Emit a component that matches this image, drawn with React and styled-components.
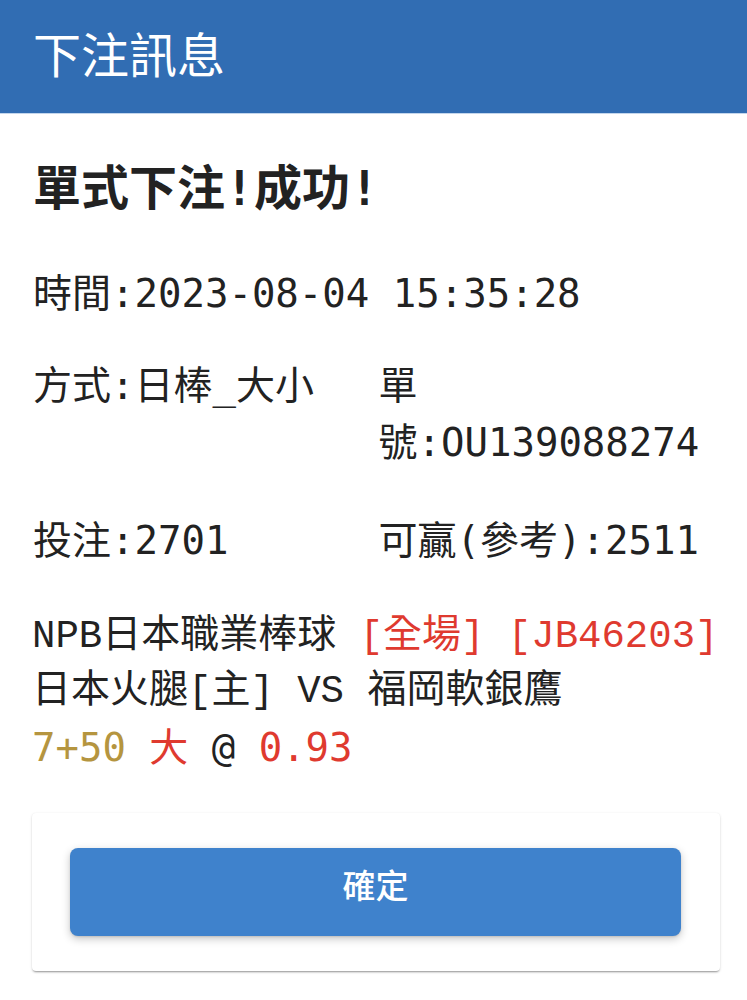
import React from "react";
import styled, { createGlobalStyle } from "styled-components";

const Global = createGlobalStyle`
  html, body { margin: 0; padding: 0; background: #ffffff; }
  body { font-family: "DejaVu Sans Mono", "Noto Sans CJK TC", monospace; color: #222; }
`;

const Page = styled.div`
  width: 747px;
  min-height: 1000px;
  background: #fff;
`;

const Header = styled.header`
  height: 114px;
  background: #316db3;
  border-bottom: 1px solid #c3d6ec;
  display: flex;
  align-items: center;
  padding-left: 33px;
  box-sizing: border-box;
`;

const HeaderTitle = styled.h1`
  margin: 0 0 10px;
  font-family: "Noto Sans CJK TC", sans-serif;
  font-weight: 400;
  font-size: 48px;
  line-height: 1;
  color: #fff;
`;

const Content = styled.main`
  padding: 41px 27px 0 32px;
  display: flex;
  flex-direction: column;
`;

const Title = styled.h2`
  margin: 0 0 0 1px;
  font-family: "DejaVu Sans Mono", "Noto Sans CJK TC", monospace;
  font-weight: 700;
  font-size: 48px;
  line-height: 67px;
  color: #222;
`;

const Block = styled.div`
  margin-top: ${(p) => p.$gap || 40}px;
  font-size: 39px;
  line-height: 57px;
  padding-left: 1px;
`;

const TwoCol = styled.div`
  margin-top: ${(p) => p.$gap || 40}px;
  display: grid;
  grid-template-columns: 1fr 1fr;
  column-gap: 4px;
  font-size: 39px;
  line-height: 57px;
  padding-left: 1px;
`;

const Cell = styled.div``;

const Match = styled.div`
  margin-top: 41px;
  font-family: "Liberation Mono", "Noto Sans CJK TC", monospace;
  font-size: 39px;
  line-height: 55px;
`;

const Line = styled.div`
  white-space: nowrap;
`;

const Tone = styled.span`
  color: ${(p) =>
    p.$tone === "red" ? "#df3a2f" : p.$tone === "gold" ? "#b5953f" : "#222"};
  font-family: ${(p) =>
    p.$sans ? `"DejaVu Sans Mono", "Noto Sans CJK TC", monospace` : "inherit"};
`;

const Card = styled.div`
  margin-top: 34px;
  background: #fff;
  border-radius: 4px;
  padding: 35px 39px 35px 38px;
  box-shadow: 0 2px 2px -1px rgba(0, 0, 0, 0.35), 0 1px 3px rgba(0, 0, 0, 0.12),
    0 0 1px rgba(0, 0, 0, 0.06);
`;

const Button = styled.button`
  display: block;
  width: 100%;
  height: 88px;
  padding: 0 0 16px;
  border: none;
  border-radius: 8px;
  background: #3f82cc;
  color: #fff;
  font-family: "Noto Sans CJK TC", sans-serif;
  font-weight: 500;
  font-size: 33px;
  cursor: pointer;
  box-shadow: 0 3px 8px rgba(0, 0, 0, 0.22), 0 1px 2px rgba(0, 0, 0, 0.1);
`;

export default function App() {
  return (
    <Page>
      <Global />
      <Header>
        <HeaderTitle>下注訊息</HeaderTitle>
      </Header>
      <Content>
        <Title>單式下注!成功!</Title>
        <Block $gap={43}>時間:2023-08-04 15:35:28</Block>
        <TwoCol $gap={35}>
          <Cell>方式:日棒_大小</Cell>
          <Cell>單號:OU139088274</Cell>
        </TwoCol>
        <TwoCol $gap={41}>
          <Cell>投注:2701</Cell>
          <Cell>可贏(參考):2511</Cell>
        </TwoCol>
        <Match>
          <Line>
            NPB日本職業棒球 <Tone $tone="red">[全場]</Tone>{" "}
            <Tone $tone="red">[JB46203]</Tone>
          </Line>
          <Line>日本火腿[主] VS 福岡軟銀鷹</Line>
          <Line>
            <Tone $tone="gold" $sans>7+50</Tone>{" "}
            <Tone $tone="red" $sans>大</Tone> <Tone $sans>@</Tone>{" "}
            <Tone $tone="red" $sans>0.93</Tone>
          </Line>
        </Match>
        <Card>
          <Button>確定</Button>
        </Card>
      </Content>
    </Page>
  );
}
